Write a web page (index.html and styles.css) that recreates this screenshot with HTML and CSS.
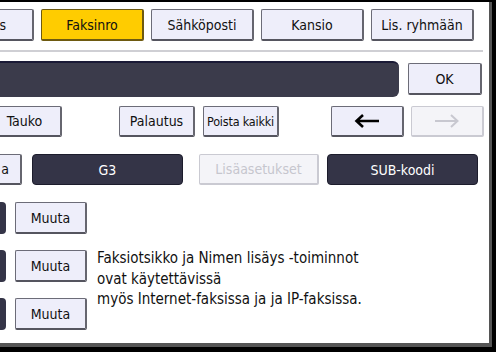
FILE: index.html
```html
<!DOCTYPE html>
<html lang="fi">
<head>
    <meta charset="UTF-8">
    <title>Faksi - Kohteen rekisteröinti</title>
    <link rel="stylesheet" href="styles.css">
</head>
<body>
    <div class="screen">
        <div class="row tabs">
            <button class="btn tab cut-left">s</button>
            <button class="btn tab active">Faksinro</button>
            <button class="btn tab">Sähköposti</button>
            <button class="btn tab">Kansio</button>
            <button class="btn tab">Lis. ryhmään</button>
        </div>
        <div class="divider"></div>

        <div class="row input-row">
            <div class="number-field"></div>
            <button class="btn ok-btn">OK</button>
        </div>

        <div class="row edit-row">
            <button class="btn pause-btn">Tauko</button>
            <button class="btn small-btn reset-btn">Palautus</button>
            <button class="btn small-btn clear-btn">Poista kaikki</button>
            <button class="btn arrow-btn back-arrow">
                <svg width="26" height="14" viewBox="0 0 26 14"><path d="M25 7H3M9 1L2.5 7L9 13" fill="none" stroke="#000" stroke-width="2.6"/></svg>
            </button>
            <button class="btn arrow-btn disabled">
                <svg width="26" height="14" viewBox="0 0 26 14"><path d="M1 7H23M17 1L23.5 7L17 13" fill="none" stroke="#c8c8d0" stroke-width="2"/></svg>
            </button>
        </div>

        <div class="row mode-row">
            <button class="btn cut-a">a</button>
            <button class="btn dark g3-btn">G3</button>
            <button class="btn disabled extra-btn">Lisäasetukset</button>
            <button class="btn dark sub-btn">SUB-koodi</button>
        </div>

        <div class="options">
            <div class="option-col">
                <div class="option"><span class="stub"></span><button class="btn muuta">Muuta</button></div>
                <div class="option"><span class="stub"></span><button class="btn muuta">Muuta</button></div>
                <div class="option"><span class="stub"></span><button class="btn muuta">Muuta</button></div>
            </div>
            <p class="note">Faksiotsikko ja Nimen lisäys -toiminnot<br>ovat käytettävissä<br>myös Internet-faksissa ja ja IP-faksissa.</p>
        </div>
    </div>
</body>
</html>
```

FILE: styles.css
```css
body {
    margin: 0;
    background-color: #000;
    font-family: "DejaVu Sans Condensed", "DejaVu Sans", sans-serif;
    font-stretch: condensed;
}
.screen {
    width: 489px;
    height: 341px;
    margin-top: 2px;
    background-color: #fff;
    border-right: 3px solid #555;
    border-bottom: 4px solid #555;
    overflow: hidden;
}
.row {
    display: flex;
    align-items: center;
}
.btn {
    box-sizing: border-box;
    height: 32px;
    padding: 0;
    background-color: #eeeefa;
    border: 1px solid #6c6c78;
    border-bottom: 2px solid #55555f;
    border-right: 2px solid #66666f;
    border-radius: 2px;
    font-family: inherit;
    font-size: 14px;
    color: #111;
    white-space: nowrap;
    flex-shrink: 0;
}
.tabs {
    margin-top: 7px;
    gap: 7px;
}
.tab {
    width: 103px;
}
.tab.active {
    background-color: #ffcc00;
    border-color: #6e5a10;
}
.cut-left {
    margin-left: -69px;
    text-align: right;
    padding-right: 26px;
}
.divider {
    width: 483px;
    height: 2px;
    margin-top: 9px;
    background-color: #cfcfd4;
}
.input-row {
    margin-top: 9px;
    gap: 9px;
}
.number-field {
    width: 399px;
    height: 36px;
    box-sizing: border-box;
    background-color: #3b3b4b;
    border-top: 2px solid #1a1a36;
    border-radius: 0 6px 6px 0;
}
.ok-btn {
    width: 74px;
}
.edit-row {
    margin-top: 9px;
    height: 31px;
}
.edit-row .btn {
    height: 31px;
}
.pause-btn {
    width: 74px;
    margin-left: -12px;
}
.small-btn {
    width: 76px;
}
.clear-btn {
    font-size: 12.5px;
    letter-spacing: -0.2px;
}
.reset-btn {
    margin-left: 57px;
    margin-right: 8px;
}
.arrow-btn {
    width: 73px;
}
.back-arrow {
    margin-left: 52px;
    margin-right: 7px;
}
.arrow-btn svg {
    display: block;
    margin: 0 auto;
}
.btn.disabled {
    background-color: #f4f4f8;
    border-color: #cacad2;
    color: #c6c6ce;
}
.mode-row {
    margin-top: 17px;
}
.mode-row .btn {
    height: 31px;
}
.cut-a {
    width: 40px;
    margin-left: -18px;
    text-align: right;
    padding-right: 11px;
}
.btn.dark {
    background-color: #343447;
    border: 1px solid #1c1c2c;
    border-radius: 4px;
    color: #fff;
}
.g3-btn {
    width: 151px;
    margin-left: 10px;
}
.extra-btn {
    width: 120px;
    margin-left: 16px;
    margin-right: 8px;
}
.sub-btn {
    width: 151px;
}
.options {
    display: flex;
    margin-top: 17px;
}
.option-col {
    display: flex;
    flex-direction: column;
    gap: 16px;
}
.option {
    display: flex;
    align-items: center;
}
.stub {
    width: 6px;
    height: 32px;
    box-sizing: border-box;
    background-color: #343447;
    border-radius: 0 4px 4px 0;
}
.muuta {
    width: 72px;
    margin-left: 9px;
}
.note {
    margin: 46px 0 0 10px;
    font-size: 15px;
    line-height: 20.5px;
    color: #111;
}
```
